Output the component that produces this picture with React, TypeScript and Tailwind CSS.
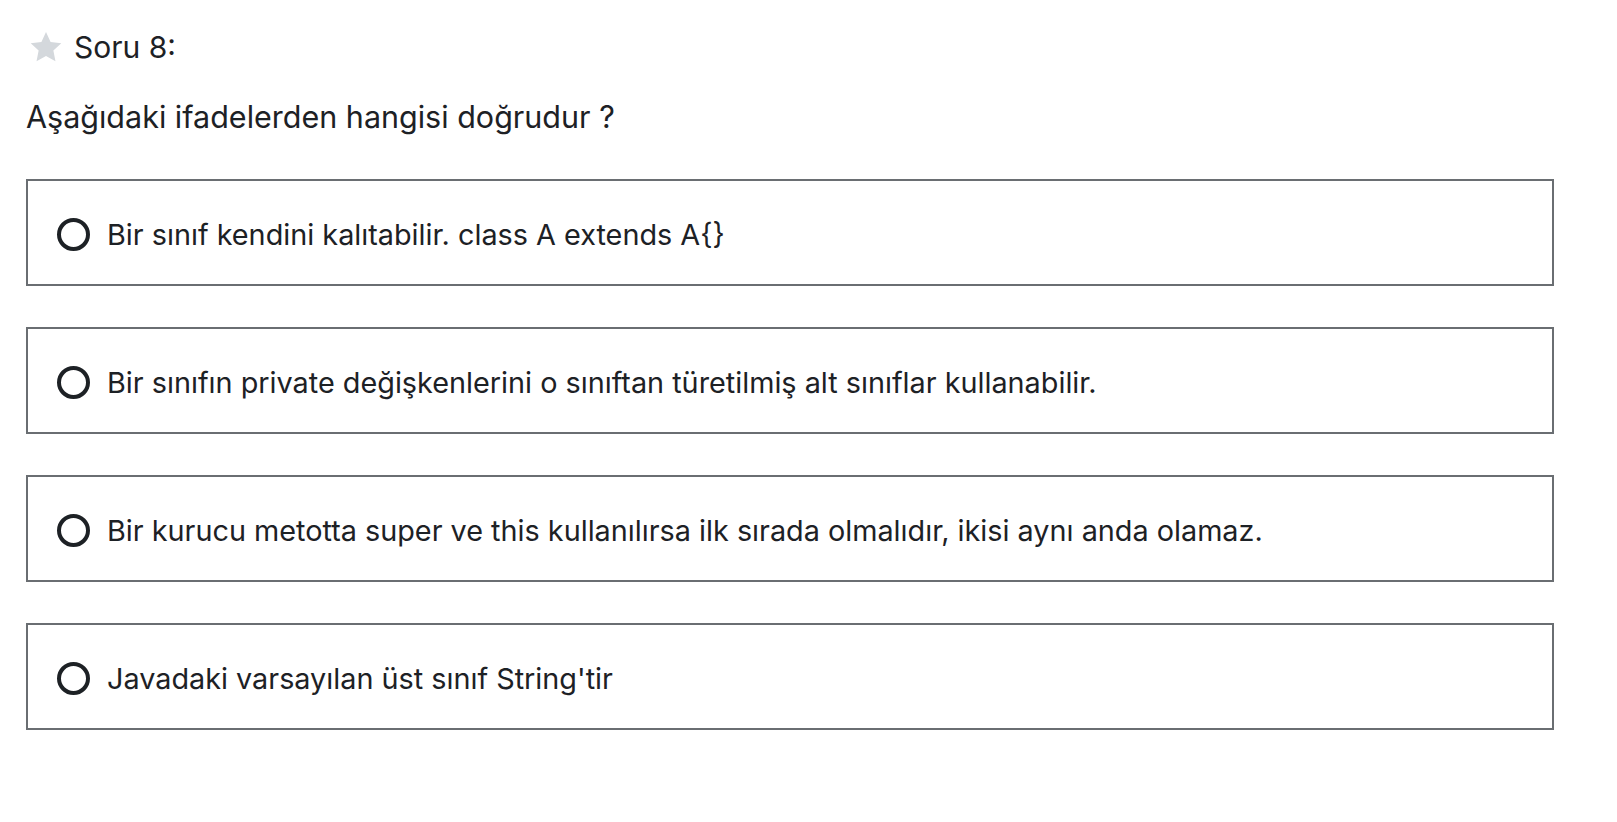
const OPTIONS = [
  "Bir sınıf kendini kalıtabilir. class A extends A{}",
  "Bir sınıfın private değişkenlerini o sınıftan türetilmiş alt sınıflar kullanabilir.",
  "Bir kurucu metotta super ve this kullanılırsa ilk sırada olmalıdır, ikisi aynı anda olamaz.",
  "Javadaki varsayılan üst sınıf String'tir",
];

function Star() {
  return (
    <svg width="34" height="32" viewBox="0 0 24 23" className="shrink-0">
      <path
        d="M12 0.8l3.3 7.1 7.7 0.9-5.7 5.3 1.5 7.7L12 18l-6.8 3.8 1.5-7.7L1 8.8l7.7-0.9z"
        fill="#d4d8dc"
      />
    </svg>
  );
}

export default function App() {
  return (
    <div
      className="bg-white text-[#1d2125] min-h-screen pl-[26px] pr-[63px] pt-[29px]"
      style={{ fontFamily: "Inter, 'Noto Sans', sans-serif" }}
    >
      <div className="flex items-center gap-[11px] pl-[3px] text-[30px] leading-[36px]">
        <Star />
        <span>Soru 8:</span>
      </div>

      <p className="mt-[34px] text-[30.5px] leading-[36px]">Aşağıdaki ifadelerden hangisi doğrudur ?</p>

      <div className="mt-[44px] flex flex-col gap-[41px]">
        {OPTIONS.map((o) => (
          <label
            key={o}
            className="flex items-center h-[107px] border-2 border-[#6a6e72] pl-[29px] pt-[4px] gap-[17px] text-[28.8px]"
          >
            <span className="w-[33px] h-[33px] rounded-full border-[4px] border-[#1d2125] shrink-0" />
            <span>{o}</span>
          </label>
        ))}
      </div>
    </div>
  );
}
